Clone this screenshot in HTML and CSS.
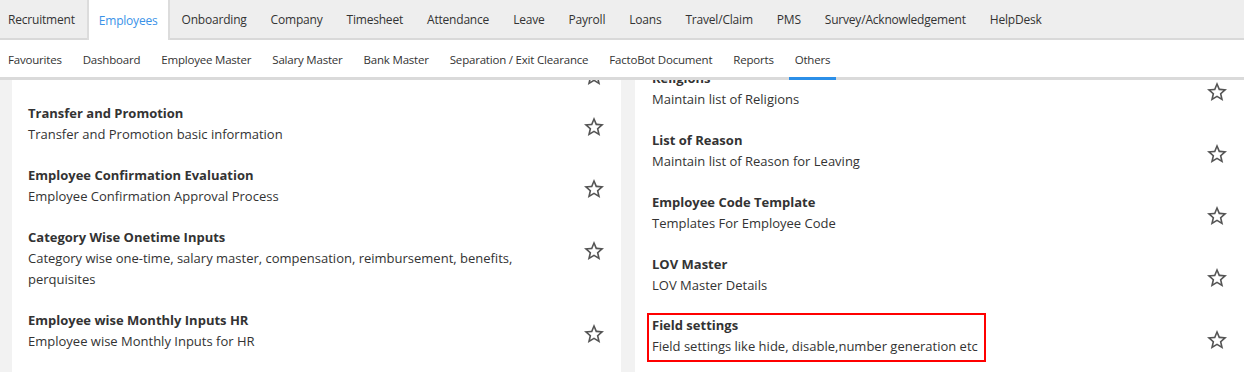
FILE: index.html
```html
<!DOCTYPE html>
<html lang="en">
<head>
    <meta charset="UTF-8">
    <meta name="viewport" content="width=device-width, initial-scale=1.0">
    <title>Employees - Others</title>
    <link rel="stylesheet" href="styles.css">
</head>
<body>

<div class="topnav">
    <a class="tab">Recruitment</a>
    <a class="tab active">Employees</a>
    <a class="tab">Onboarding</a>
    <a class="tab">Company</a>
    <a class="tab">Timesheet</a>
    <a class="tab">Attendance</a>
    <a class="tab">Leave</a>
    <a class="tab">Payroll</a>
    <a class="tab">Loans</a>
    <a class="tab">Travel/Claim</a>
    <a class="tab">PMS</a>
    <a class="tab">Survey/Acknowledgement</a>
    <a class="tab">HelpDesk</a>
</div>

<div class="subnav">
    <a class="sub">Favourites</a>
    <a class="sub">Dashboard</a>
    <a class="sub">Employee Master</a>
    <a class="sub">Salary Master</a>
    <a class="sub">Bank Master</a>
    <a class="sub">Separation / Exit Clearance</a>
    <a class="sub">FactoBot Document</a>
    <a class="sub">Reports</a>
    <a class="sub active">Others</a>
</div>

<div class="content">
    <div class="panel">
        <div class="list left">
            <div class="item cut">
                <div class="text">
                    <div class="title">Employee Documents</div>
                    <div class="desc">Employee document upload</div>
                </div>
                <span class="star"><svg viewBox="0 0 24 24" width="24" height="24"><path d="M22 9.24l-7.19-.62L12 2 9.19 8.63 2 9.24l5.46 4.73L5.82 21 12 17.27 18.18 21l-1.63-7.03L22 9.24zM12 15.4l-3.76 2.27 1-4.28-3.32-2.88 4.38-.38L12 6.1l1.71 4.04 4.38.38-3.32 2.88 1 4.28L12 15.4z"/></svg></span>
            </div>
            <div class="item">
                <div class="text">
                    <div class="title">Transfer and Promotion</div>
                    <div class="desc">Transfer and Promotion basic information</div>
                </div>
                <span class="star"><svg viewBox="0 0 24 24" width="24" height="24"><path d="M22 9.24l-7.19-.62L12 2 9.19 8.63 2 9.24l5.46 4.73L5.82 21 12 17.27 18.18 21l-1.63-7.03L22 9.24zM12 15.4l-3.76 2.27 1-4.28-3.32-2.88 4.38-.38L12 6.1l1.71 4.04 4.38.38-3.32 2.88 1 4.28L12 15.4z"/></svg></span>
            </div>
            <div class="item">
                <div class="text">
                    <div class="title">Employee Confirmation Evaluation</div>
                    <div class="desc">Employee Confirmation Approval Process</div>
                </div>
                <span class="star"><svg viewBox="0 0 24 24" width="24" height="24"><path d="M22 9.24l-7.19-.62L12 2 9.19 8.63 2 9.24l5.46 4.73L5.82 21 12 17.27 18.18 21l-1.63-7.03L22 9.24zM12 15.4l-3.76 2.27 1-4.28-3.32-2.88 4.38-.38L12 6.1l1.71 4.04 4.38.38-3.32 2.88 1 4.28L12 15.4z"/></svg></span>
            </div>
            <div class="item">
                <div class="text">
                    <div class="title">Category Wise Onetime Inputs</div>
                    <div class="desc">Category wise one-time, salary master, compensation, reimbursement, benefits, perquisites</div>
                </div>
                <span class="star"><svg viewBox="0 0 24 24" width="24" height="24"><path d="M22 9.24l-7.19-.62L12 2 9.19 8.63 2 9.24l5.46 4.73L5.82 21 12 17.27 18.18 21l-1.63-7.03L22 9.24zM12 15.4l-3.76 2.27 1-4.28-3.32-2.88 4.38-.38L12 6.1l1.71 4.04 4.38.38-3.32 2.88 1 4.28L12 15.4z"/></svg></span>
            </div>
            <div class="item">
                <div class="text">
                    <div class="title">Employee wise Monthly Inputs HR</div>
                    <div class="desc">Employee wise Monthly Inputs for HR</div>
                </div>
                <span class="star"><svg viewBox="0 0 24 24" width="24" height="24"><path d="M22 9.24l-7.19-.62L12 2 9.19 8.63 2 9.24l5.46 4.73L5.82 21 12 17.27 18.18 21l-1.63-7.03L22 9.24zM12 15.4l-3.76 2.27 1-4.28-3.32-2.88 4.38-.38L12 6.1l1.71 4.04 4.38.38-3.32 2.88 1 4.28L12 15.4z"/></svg></span>
            </div>
        </div>
    </div>

    <div class="panel">
        <div class="list right">
            <div class="item">
                <div class="text">
                    <div class="title">Religions</div>
                    <div class="desc">Maintain list of Religions</div>
                </div>
                <span class="star"><svg viewBox="0 0 24 24" width="24" height="24"><path d="M22 9.24l-7.19-.62L12 2 9.19 8.63 2 9.24l5.46 4.73L5.82 21 12 17.27 18.18 21l-1.63-7.03L22 9.24zM12 15.4l-3.76 2.27 1-4.28-3.32-2.88 4.38-.38L12 6.1l1.71 4.04 4.38.38-3.32 2.88 1 4.28L12 15.4z"/></svg></span>
            </div>
            <div class="item">
                <div class="text">
                    <div class="title">List of Reason</div>
                    <div class="desc">Maintain list of Reason for Leaving</div>
                </div>
                <span class="star"><svg viewBox="0 0 24 24" width="24" height="24"><path d="M22 9.24l-7.19-.62L12 2 9.19 8.63 2 9.24l5.46 4.73L5.82 21 12 17.27 18.18 21l-1.63-7.03L22 9.24zM12 15.4l-3.76 2.27 1-4.28-3.32-2.88 4.38-.38L12 6.1l1.71 4.04 4.38.38-3.32 2.88 1 4.28L12 15.4z"/></svg></span>
            </div>
            <div class="item">
                <div class="text">
                    <div class="title">Employee Code Template</div>
                    <div class="desc">Templates For Employee Code</div>
                </div>
                <span class="star"><svg viewBox="0 0 24 24" width="24" height="24"><path d="M22 9.24l-7.19-.62L12 2 9.19 8.63 2 9.24l5.46 4.73L5.82 21 12 17.27 18.18 21l-1.63-7.03L22 9.24zM12 15.4l-3.76 2.27 1-4.28-3.32-2.88 4.38-.38L12 6.1l1.71 4.04 4.38.38-3.32 2.88 1 4.28L12 15.4z"/></svg></span>
            </div>
            <div class="item">
                <div class="text">
                    <div class="title">LOV Master</div>
                    <div class="desc">LOV Master Details</div>
                </div>
                <span class="star"><svg viewBox="0 0 24 24" width="24" height="24"><path d="M22 9.24l-7.19-.62L12 2 9.19 8.63 2 9.24l5.46 4.73L5.82 21 12 17.27 18.18 21l-1.63-7.03L22 9.24zM12 15.4l-3.76 2.27 1-4.28-3.32-2.88 4.38-.38L12 6.1l1.71 4.04 4.38.38-3.32 2.88 1 4.28L12 15.4z"/></svg></span>
            </div>
            <div class="item">
                <div class="text marked">
                    <div class="title">Field settings</div>
                    <div class="desc">Field settings like hide, disable,number generation etc</div>
                </div>
                <span class="star"><svg viewBox="0 0 24 24" width="24" height="24"><path d="M22 9.24l-7.19-.62L12 2 9.19 8.63 2 9.24l5.46 4.73L5.82 21 12 17.27 18.18 21l-1.63-7.03L22 9.24zM12 15.4l-3.76 2.27 1-4.28-3.32-2.88 4.38-.38L12 6.1l1.71 4.04 4.38.38-3.32 2.88 1 4.28L12 15.4z"/></svg></span>
            </div>
        </div>
    </div>
</div>

</body>
</html>
```

FILE: styles.css
```css
body {
    margin: 0;
    font-family: 'Open Sans', 'Noto Sans', sans-serif;
    color: #333;
    background-color: #f2f2f2;
    height: 372px;
    overflow: hidden;
}

/* top module tabs */
.topnav {
    display: flex;
    align-items: stretch;
    height: 38px;
    background-color: #eeeeee;
    border-bottom: 2px solid #d9d9d9;
}

.tab {
    display: flex;
    align-items: center;
    padding: 1px 10px 0;
    font-size: 12px;
    letter-spacing: -0.2px;
    color: #333;
    border-left: 2px solid transparent;
    border-right: 2px solid transparent;
}

.tab:first-child {
    border-left: none;
    padding-left: 8px;
}

.tab.active {
    background-color: #fff;
    color: #3a92e8;
    border-left-color: #dcdcdc;
    border-right-color: #dcdcdc;
    margin-bottom: -2px; /* sits over the strip border */
}

/* second level menu */
.subnav {
    display: flex;
    gap: 9px;
    height: 37px;
    padding-left: 2px;
    background-color: #fff;
    border-bottom: 3px solid #dadada;
}

.sub {
    display: flex;
    align-items: center;
    padding: 1px 6px 0;
    margin-bottom: -3px;
    border-bottom: 3px solid transparent;
    font-size: 11.5px;
    letter-spacing: -0.2px;
    color: #333;
}

.sub.active {
    border-bottom-color: #2b8fe8;
}

/* two column menu list */
.content {
    display: flex;
    gap: 14px;
    padding-left: 12px;
    height: 292px;
    overflow: hidden;
}

.panel {
    flex: 1;
    background-color: #fff;
    overflow: hidden;
}

/* lists are scrolled a little, first rows sit under the menu */
.list.left {
    margin-top: -55px;
}

.list.right {
    margin-top: -22px;
}

.item {
    display: flex;
    justify-content: space-between;
    align-items: flex-start;
    gap: 20px;
    padding: 10px 0 10px 16px;
}

.list.right .item {
    padding-left: 17px;
}

.text {
    flex: 1;
    font-size: 13px;
    line-height: 21px;
}

.title {
    font-weight: bold;
}

.star {
    margin-top: 12px;
    margin-right: 15px;
    height: 24px;
}

.star svg {
    display: block;
    fill: #555;
}

.item.cut {
    padding-bottom: 16px;
}

.item.cut .star {
    align-self: flex-end;
    margin-bottom: -11px;
}

.text.marked {
    flex: none;
    border: 2px solid #f00;
    padding: 0 6px 3px 3px;
    margin: -3px 0 -5px -5px;
}
```
